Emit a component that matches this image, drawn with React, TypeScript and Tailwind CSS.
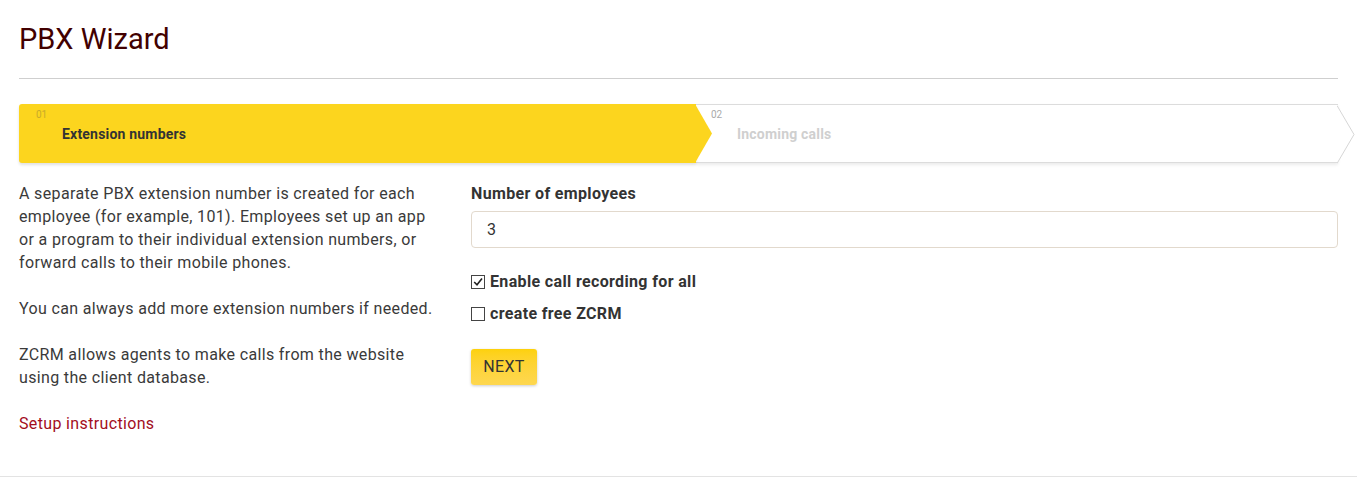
import React from "react";

function Tip({ fill, stroke }: { fill: string; stroke?: string }) {
  return (
    <svg className="absolute top-0 -right-[17px] z-10" width="18" height="59" viewBox="0 0 18 59">
      <polygon points="0,0 17,29.5 0,59" fill={fill} />
      {stroke && <polyline points="0,0.5 17,29.5 0,58.5" fill="none" stroke={stroke} strokeWidth="1" />}
    </svg>
  );
}

function Check({ checked }: { checked?: boolean }) {
  return (
    <span className="flex h-[14px] w-[14px] items-center justify-center border border-[#444] bg-white">
      {checked && (
        <svg width="12" height="12" viewBox="0 0 12 12">
          <polyline points="2.2,6 5,8.8 10,2.6" fill="none" stroke="#222" strokeWidth="1.6" />
        </svg>
      )}
    </span>
  );
}

export default function App() {
  return (
    <div className="min-h-[478px] bg-white font-['Roboto',sans-serif] text-[#3a3a3a]">
      <div className="px-[19px]">
        <h1 className="pt-[19px] text-[29px] leading-[40px] text-[#420000]">PBX Wizard</h1>
        <div className="mt-[19px] h-px bg-[#cfcfcf]" />

        {/* stepper */}
        <div className="mt-[25px] flex h-[59px]">
          <div className="relative z-20 w-[677px] rounded-l-[3px] bg-[#fcd51e] pl-[17px] shadow-[0_2px_3px_rgba(0,0,0,0.12)]">
            <div className="pt-[6px] text-[10px] leading-[10px] text-[#c8aa2a]">01</div>
            <div className="pl-[26px] pt-[5px] text-[14px] font-bold leading-[18px] tracking-[0.2px] text-[#333]">Extension numbers</div>
            <Tip fill="#fcd51e" />
          </div>
          <div className="relative flex-1 border-y border-[#dcdcdc] bg-white pl-[15px] shadow-[0_2px_3px_rgba(0,0,0,0.08)]">
            <div className="pt-[5px] text-[10px] leading-[10px] text-[#aaa]">02</div>
            <div className="pl-[26px] pt-[5px] text-[14px] font-bold leading-[18px] tracking-[0.2px] text-[#cfcfcf]">Incoming calls</div>
            <Tip fill="#ffffff" stroke="#d6d6d6" />
          </div>
        </div>

        <div className="mt-[19px] flex gap-[32px] tracking-[0.35px]">
          <div className="w-[420px] text-[16px] leading-[23px]">
            <p className="mb-[23px]">
              A separate PBX extension number is created for each employee (for example, 101). Employees set up an app
              or a program to their individual extension numbers, or forward calls to their mobile phones.
            </p>
            <p className="mb-[23px]">You can always add more extension numbers if needed.</p>
            <p className="mb-[23px]">ZCRM allows agents to make calls from the website using the client database.</p>
            <a className="text-[#a30d1d]" href="#">Setup instructions</a>
          </div>

          <div className="flex-1">
            <label className="block text-[16px] font-bold leading-[23px] text-[#333]">Number of employees</label>
            <input
              className="mt-[6px] h-[37px] w-full rounded-[4px] border border-[#e2d9cd] px-[15px] text-[16px] text-[#333] outline-none"
              defaultValue="3"
            />
            <div className="mt-[22px] flex flex-col gap-[9px] text-[16px] font-bold leading-[23px] text-[#333]">
              <label className="flex items-center gap-[5px]">
                <Check checked />
                Enable call recording for all
              </label>
              <label className="flex items-center gap-[5px]">
                <Check />
                create free ZCRM
              </label>
            </div>
            <button className="mt-[24px] h-[36px] w-[66px] rounded-[3px] bg-gradient-to-b from-[#fdd10a] to-[#fed74f] text-[16px] text-[#333] shadow-[0_1px_3px_rgba(0,0,0,0.2)]">
              NEXT
            </button>
          </div>
        </div>
      </div>
      <div className="mt-[41px] h-px bg-[#e3e3e3]" />
    </div>
  );
}
